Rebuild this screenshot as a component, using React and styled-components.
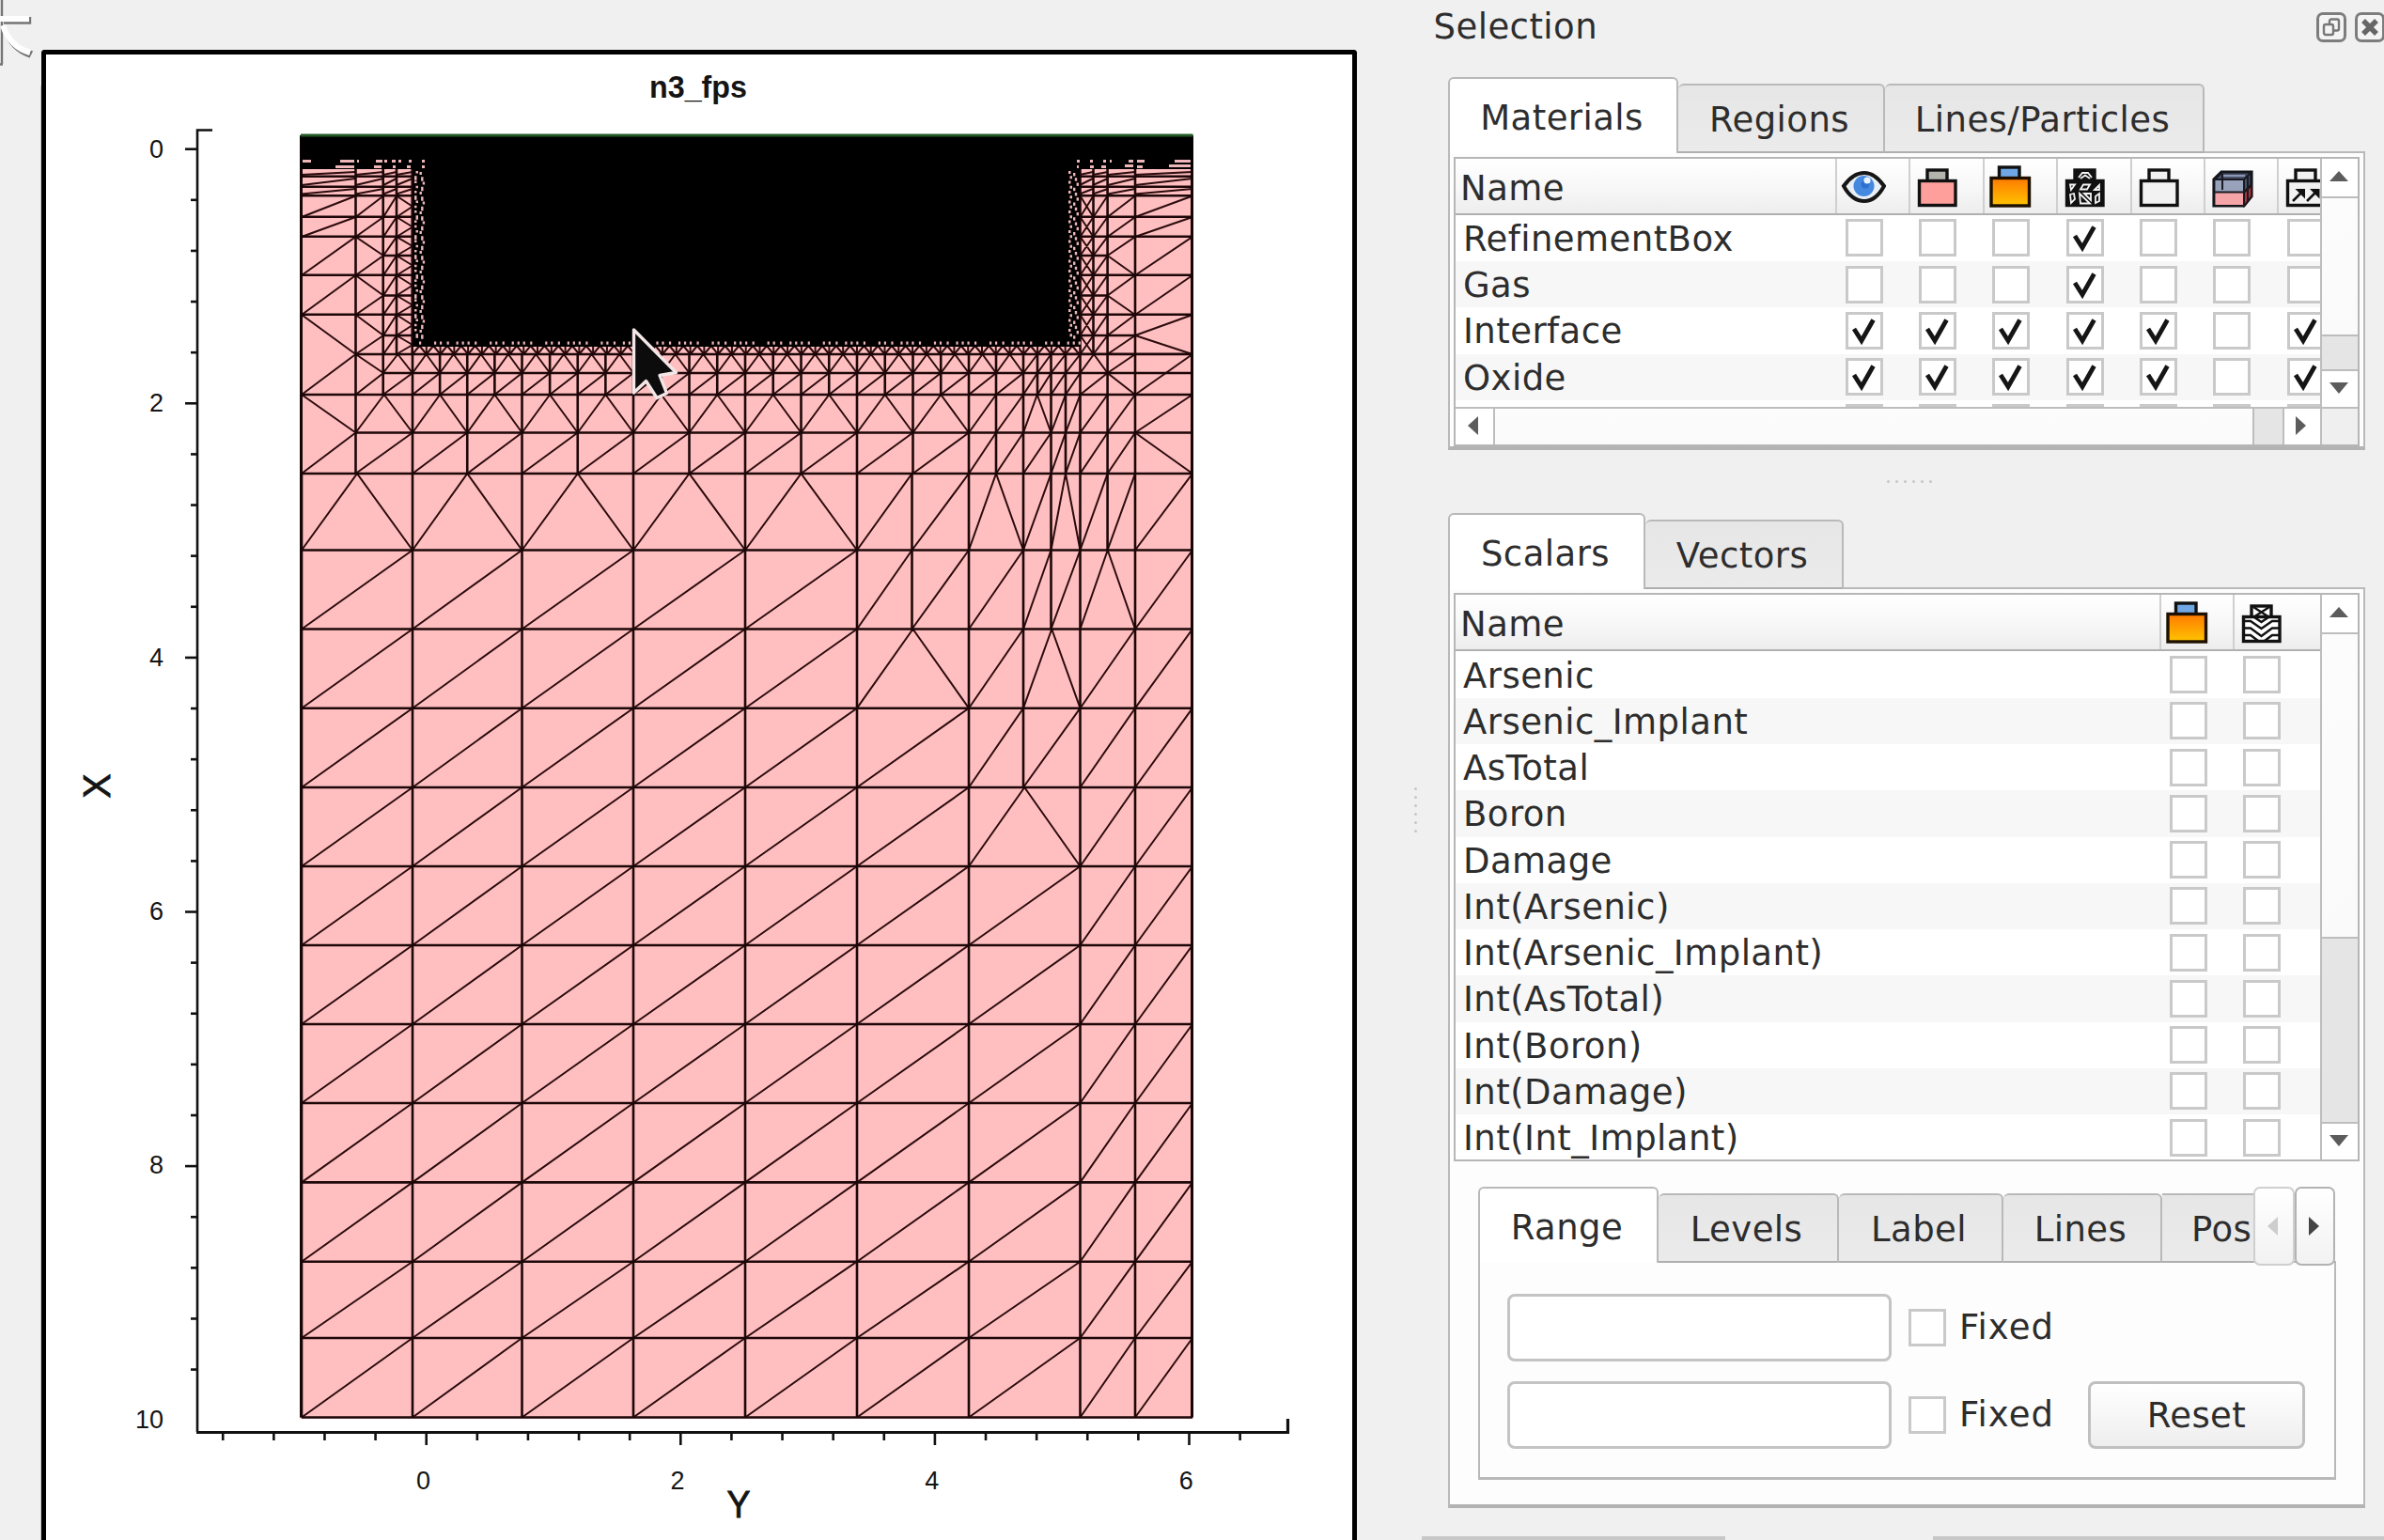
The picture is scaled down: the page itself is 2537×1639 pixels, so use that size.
import React from "react";
import styled, { createGlobalStyle, css } from "styled-components";

const Global = createGlobalStyle`
  * { box-sizing: border-box; }
  body { margin: 0; background: #f0f0f0; overflow: hidden; }
`;

const LINE = "#b9b9b9";

const Window = styled.div`
  display: flex;
  width: 2537px;
  height: 1639px;
  overflow: hidden;
  position: relative;
  background: #f0f0f0;
  color: #2d2d2d;
  font: 37px/44px "DejaVu Sans", Verdana, sans-serif;
  letter-spacing: 0.45px;
`;

/* ---------- plot ---------- */

const PlotArea = styled.main`
  flex: 0 0 1500px;
  padding: 53px 56px 0 44px;
  letter-spacing: 0;
`;

const PlotFrame = styled.div`
  height: 1600px;
  border: 5px solid #000;
  border-bottom: 0;
  border-radius: 4px 4px 0 0;
  background: #fff;
  box-shadow: -2px 36px 0 -1px #c9c9c9;
  overflow: hidden;
  svg { display: block; }
`;

const PlotText = styled.text`
  font-family: "Liberation Sans", Arial, sans-serif;
  font-size: ${(p) => p.$size}px;
  font-weight: ${(p) => (p.$bold ? 700 : 400)};
  fill: #141414;
  stroke: #141414;
  stroke-width: ${(p) => (p.$heavy ? 0.9 : 0)};
`;

const CornerMark = styled.svg`
  position: absolute;
  left: 0;
  top: 0;
`;

const R = {
  a: 208.5, b: 231, c: 252, d: 293, e: 335, f: 377, g: 397, h: 420, i: 460.5, j: 504,
  k: 585.5, l: 669.5, m: 753.7, n: 838, o: 922, p: 1006, q: 1090, r: 1174, s: 1258.4,
  t: 1342.7, u: 1424, v: 1508.5,
};
const COARSE = [321, 439, 555.5, 674, 793, 912, 1031];
const half = (xs) => xs.flatMap((x, i) => (i < xs.length - 1 ? [x, (x + xs[i + 1]) / 2] : [x]));
const MID = half(COARSE);
MID[1] = 378.5;
const FINE = half(MID);
FINE[3] = 407.7;
const cells = (xs, kind) => xs.slice(1).map((x, i) => [xs[i], x, kind]);

const bands = [
  [R.f, R.g, [...cells([...FINE.slice(3), 1060, 1089], "^"), ...cells([1089, 1104, 1118.5, 1134, 1149.5], "/"),
    [1149.5, 1178.6, "^"], [1178.6, 1208, "/"]]],
  [R.g, R.h, [...cells([...FINE.slice(3), 1060, 1089, 1104, 1118.5, 1134, 1149.5, 1178.6], "/"), [1178.6, 1208, "\\"]]],
  [R.h, R.i, [...cells(MID.slice(1), "^"), ...cells([1031, 1060, 1089], "/"), [1089, 1118.5, "^"],
    ...cells([1118.5, 1134, 1149.5, 1178.6, 1208, 1269], "/")]],
  [R.i, R.j, [...cells([...MID.slice(1), 1060, 1089, 1118.5, 1134, 1149.5, 1178.6, 1208], "/"), [1208, 1269, "\\"]]],
  [R.j, R.k, [...cells(COARSE.slice(0, 6), "^"), ...cells([912, 970.5, 1031], "/"), [1031, 1089, "^"], [1089, 1118.5, "/"],
    [1118.5, 1149.5, "^"], ...cells([1149.5, 1178.6, 1208, 1269], "/")]],
  [R.k, R.l, [...cells([...COARSE.slice(0, 6), 970.5, 1031, 1089, 1118.5, 1149.5], "/"), [1149.5, 1208, "^"], [1208, 1269, "/"]]],
  [R.l, R.m, [...cells(COARSE.slice(0, 6), "/"), [912, 1031, "^"], [1031, 1089, "/"], [1089, 1149.5, "^"],
    ...cells([1149.5, 1208, 1269], "/")]],
  [R.m, R.n, cells([...COARSE, 1089, 1149.5, 1208, 1269], "/")],
  [R.n, R.o, [...cells(COARSE, "/"), [1031, 1149.5, "^"], ...cells([1149.5, 1208, 1269], "/")]],
];
const lowRows = [R.o, R.p, R.q, R.r, R.s, R.t, R.u, R.v];
lowRows.slice(1).forEach((y, i) => bands.push([lowRows[i], y, cells([...COARSE, 1149.5, 1208, 1269], "/")]));

const seg = (x1, y1, x2, y2) => `M${x1} ${y1}L${x2} ${y2}`;

let diagonals = "";
let straights = "";
bands.forEach(([y0, y1, list]) => {
  straights += seg(list[0][0], y0, 1269, y0);
  list.forEach(([x0, x1, kind]) => {
    straights += seg(x0, y0, x0, y1);
    if (kind === "/") diagonals += seg(x0, y1, x1, y0);
    if (kind === "\\") diagonals += seg(x0, y0, x1, y1);
    if (kind === "^") diagonals += seg(x0, y1, (x0 + x1) / 2, y0) + seg(x1, y1, (x0 + x1) / 2, y0);
  });
});
straights += seg(321, R.v, 1269, R.v) + seg(321, R.h, 408, R.h) + seg(378.5, R.f, 408, R.f);
straights += seg(378.5, 150, 378.5, R.j) + seg(407.7, 150, 407.7, R.h) + seg(422, 150, 422, R.f);
straights += seg(438.7, 150, 438.7, R.f);

/* left flank */
[188, 199, R.a, R.b, R.c, R.d, R.e].forEach((y) => { straights += seg(321, y - 0.2, 452, y - 0.2); });
[272, 314.5, 357].forEach((y) => { straights += seg(408, y, 452, y) + seg(1149, y, y > 350 ? 1208 : 1179, y); });
[[R.a, R.b], [R.b, R.c], [R.c, R.d], [R.d, R.e], [R.f, R.h], [R.i, R.j]].forEach(([y0, y1]) => {
  diagonals += seg(321, y1, 378.5, y0);
});
diagonals += seg(321, R.e, 378.5, R.f) + seg(321, R.h, 378.5, R.i);
[[R.a, R.b], [R.b, R.c]].forEach(([y0, y1]) => { diagonals += seg(378.5, y1, 408, y0) + seg(1178.6, y1, 1208, y0); });
[[R.c, 272, R.d], [R.d, 314.5, R.e], [R.e, 357, R.f], [R.f, R.g, R.h]].forEach(([y0, ym, y1]) => {
  diagonals += seg(378.5, y0, 408, ym) + seg(408, ym, 378.5, y1);
});
const steps = [R.a, R.b, R.c, 272, R.d, 314.5, R.e, 357, R.f];
steps.slice(1).forEach((y, i) => {
  const y0 = steps[i];
  diagonals += seg(408, y, 422, y0) + seg(422, y0, 439, (y + y0) / 2) + seg(439, (y + y0) / 2, 422, y);
  diagonals += seg(1163.5, y, 1178.6, y0) + seg(1149.5, y, 1163.5, y0) + seg(1149.5, y0, 1163.5, y);
});

/* right flank */
[188, 199, R.a, R.b, R.c, R.d, R.e, R.f].forEach((y) => { straights += seg(1136, y - 0.2, 1269, y - 0.2); });
[1149.5, 1163.5, 1178.6, 1208].forEach((x) => { straights += seg(x, 150, x, x === 1163.5 ? R.f : R.g); });
straights += seg(1208, R.f, 1208, R.h);
[[R.a, R.b], [R.b, R.c], [R.c, R.d], [R.d, R.e], [R.f, R.h]].forEach(([y0, y1]) => { diagonals += seg(1208, y1, 1269, y0); });
diagonals += seg(1208, 357, 1269, R.e) + seg(1208, 357, 1269, R.f);
diagonals += seg(1178.6, 357, 1208, R.e) + seg(1178.6, R.f, 1208, 357);
[[R.c, 272, R.d], [R.d, 314.5, R.e]].forEach(([y0, ym, y1]) => {
  diagonals += seg(1208, y0, 1178.6, ym) + seg(1178.6, ym, 1208, y1);
});

/* thin layers just below the surface */
[[181, 188], [188, 199], [199, 208.5]].forEach(([y0, y1]) => {
  [[321, 378.5], [378.5, 408], [408, 422], [422, 439], [1149, 1163], [1163, 1179], [1179, 1208], [1208, 1269]].forEach(([x0, x1]) => {
    diagonals += seg(x0, y1 - 2, x1, y0 + 2);
  });
});

/* transition row under the refined block */
for (let x = 439; x < 1145; x += 14.78) {
  diagonals += seg(x, 368, x, R.f) + seg(x, R.f, x + 7.4, 368) + seg(x + 7.4, 368, x + 14.8, R.f);
}

const specks = [];
[[322, 170, 9], [362, 170, 15], [357, 176, 20], [400, 170, 7], [398, 176, 8], [380, 170, 2], [409, 170, 3],
  [417, 170, 4], [424, 170, 3], [435, 170, 3], [433, 176, 4], [449, 170, 3], [449, 176, 3], [418, 176, 3],
  [1146, 170, 3], [1160, 170, 3], [1174, 170, 3], [1181, 170, 2], [1201, 170, 5], [1210, 170, 8], [1250, 170, 17],
  [1244, 175, 23], [1160, 176, 4], [1172, 176, 5], [1197, 175, 9], [1210, 176, 6], [1146, 176, 2],
].forEach(([x, y, w]) => specks.push([x, y, w, 3]));
for (let y = 182, n = 0; y < 358; y += 5.25, n += 1) {
  specks.push([n % 3 ? 441 : 442.5, y, 2.5, n % 4 === 1 ? 4.5 : 2.5]);
  specks.push([446.5 + (n % 4 === 3 ? 1 : n % 4) * 1.6, y + 1, 2.4, n % 2 ? 4.5 : 3]);
  specks.push([1137 + (n % 2) * 1.5, y, 2.5, 3]);
  specks.push([1142 + (n % 3) * 1.8, y + 2, 2.4, 3.4]);
}
for (let x = 442, n = 0; x < 1146; x += 29.55, n += 1) {
  [4, 14, 20, 26].forEach((o, i) => (i !== 1 || n % 2) && specks.push([x + o, 363.5, 2.2, 3.2]));
}

const unit = 135.3;
const yTicks = Array.from({ length: 25 }, (_, i) => ({ y: 158.7 + i * unit * 0.4, major: i % 5 === 0 }));
const xTicks = Array.from({ length: 21 }, (_, i) => ({ x: 453.7 + (i - 4) * unit * 0.4, major: (i - 4) % 5 === 0 }));

function MeshPlot() {
  return (
    <svg width="1390" height="1581" viewBox="49 58 1390 1581">
      <PlotText $size={33} $bold x="691" y="104" textLength="104" lengthAdjust="spacingAndGlyphs">n3_fps</PlotText>
      <rect x="319.5" y="144" width="950" height="1366" fill="#ffbfc0" />
      <path d={diagonals} stroke="#2b0b0d" strokeWidth="2" fill="none" />
      <path d={straights} stroke="#1d0708" strokeWidth="2.6" fill="none" />
      <path d="M320.5 144V1508.5M1268.5 144V1508.5" stroke="#160506" strokeWidth="3" />
      <rect x="319.5" y="145" width="950" height="35" />
      <rect x="452" y="145" width="683.5" height="218" />
      <rect x="439.5" y="180" width="13" height="188" />
      <rect x="1135" y="180" width="14" height="188" />
      <rect x="439.5" y="362" width="710" height="7" />
      {specks.map(([x, y, w, h], i) => <rect key={i} x={x} y={y} width={w} height={h} fill="#eeb6b9" />)}
      <rect x="320" y="142.5" width="949.5" height="3" fill="#245a26" />
      <g stroke="#111" strokeWidth="2.6" fill="none">
        <path d="M226 138.5H210V1524" />
        <path d="M209 1524.5H1370.5V1510" strokeWidth="3.2" />
        {yTicks.map(({ y, major }) => <path key={y} d={`M${major ? 197 : 203} ${y}H210`} />)}
        {xTicks.map(({ x, major }) => <path key={x} d={`M${x} 1525V${major ? 1538 : 1533}`} />)}
      </g>
      {[0, 2, 4, 6, 8, 10].map((v) => (
        <PlotText key={v} $size={27} x="174" y={168 + v * 135.15} textAnchor="end">{v}</PlotText>
      ))}
      {[0, 2, 4, 6].map((v) => (
        <PlotText key={v} $size={27} x={450.5 + v * 135.3} y="1584.5" textAnchor="middle">{v}</PlotText>
      ))}
      <PlotText $size={41} $heavy x="786" y="1615" textAnchor="middle" textLength="25" lengthAdjust="spacingAndGlyphs">Y</PlotText>
      <PlotText $size={41} $heavy transform="translate(117 836.5) rotate(-90)" textAnchor="middle" textLength="26" lengthAdjust="spacingAndGlyphs">X</PlotText>
      <path d="M674.5 351V418L687.5 405.5L699 423.5L709.5 418.5L702 399.5L719.5 396.5Z" fill="#0c0c0c" stroke="#f3e6e6" strokeWidth="3.4" strokeLinejoin="round" />
    </svg>
  );
}

/* ---------- dock ---------- */

const Gutter = styled.div`
  flex: 0 0 14px;
  display: flex;
  align-items: flex-start;
  padding: 838px 0 0 5px;
`;

const Grip = styled.div`
  display: flex;
  flex-direction: ${(p) => (p.$vertical ? "column" : "row")};
  gap: 6px;
  i { width: 3px; height: 3px; border-radius: 2px; background: #c6c6c6; }
`;

const Dock = styled.aside`
  flex: 1;
  display: flex;
  flex-direction: column;
  padding-left: 27px;
`;

const DockTitle = styled.header`
  display: flex;
  height: 82px;
  margin-left: -15.5px;
  padding-top: 6px;
  h1 { margin: 0; padding-top: 1px; flex: 1; font-size: 37px; font-weight: 400; }
`;

const TitleButton = styled.div`
  width: 32px;
  height: 32px;
  margin: 7px 9px 0 0;
  border: 3px solid #7d7d7d;
  border-radius: 7px;
  background: #f4f4f4;
  svg { display: block; }
  &:last-child { margin-right: -1px; }
`;

const Strip = styled.div`
  display: flex;
  align-items: flex-end;
  height: 81px;
  position: relative;
  z-index: 1;
`;

const Tab = styled.div`
  display: flex;
  align-items: center;
  justify-content: ${(p) => (p.$cut ? "flex-start" : "center")};
  width: ${(p) => p.$w}px;
  height: 74px;
  padding: 4px ${(p) => (p.$cut ? 0 : 3)}px 0 ${(p) => (p.$cut ? 31 : 0)}px;
  overflow: hidden;
  border: 2px solid ${LINE};
  border-left-width: 0;
  border-bottom-color: #aeaeae;
  border-right-width: ${(p) => (p.$cut ? 0 : 2)}px;
  border-radius: ${(p) => (p.$cut ? 0 : "6px 6px 0 0")};
  background: linear-gradient(#e6e6e6, #ebebeb);
  ${(p) => p.$on && css`
    height: 81px;
    padding: 5px 3px 0 0;
    border-left-width: 2px;
    border-bottom: 0;
    background: #fff;
  `}
`;

const Page = styled.section`
  width: 976px;
  height: ${(p) => p.$h}px;
  margin-top: -2px;
  padding: 4px 4px 0;
  border: 2px solid ${LINE};
  border-bottom: 4px solid #b3b3b3;
  background: #fdfdfd;
`;

const ListBox = styled.div`
  display: grid;
  grid-template: 1fr ${(p) => (p.$hbar ? "40px" : "0")} / 920px 40px;
  height: ${(p) => p.$h}px;
  border: 2px solid #b6b6b6;
  background: #fff;
  overflow: hidden;
`;

const Rows = styled.div`
  display: flex;
  flex-direction: column;
  min-height: 0;
  overflow: hidden;
`;

const HeadRow = styled.div`
  display: flex;
  flex: 0 0 60px;
  height: 60px;
  margin-bottom: ${(p) => p.$gap || 0}px;
  border-bottom: 2px solid #b0b0b0;
  background: linear-gradient(#fff, #f7f7f7 55%, #ededed);
  line-height: 52px;
`;

const Row = styled.div`
  display: flex;
  flex: 0 0 49.25px;
  align-items: center;
  background: ${(p) => (p.$odd ? "#f7f7f7" : "#fff")};
`;

const NameCell = styled.div`
  flex: 0 0 ${(p) => p.$w}px;
  padding: ${(p) => (p.$head ? "6px 0 0 5px" : "3px 0 0 8px")};
`;

const IconCell = styled.div`
  flex: 0 0 78.4px;
  display: flex;
  align-items: center;
  padding: 4px 0 0 4px;
  border-left: 2px solid #cfcfcf;
`;

const BoxCell = styled.div`
  flex: 0 0 78.4px;
  padding-left: 10.5px;
`;

const Check = styled.div`
  flex: none;
  width: 40px;
  height: 40px;
  border: 3px solid #c9c9c9;
  background: #fff;
  svg { display: block; }
`;

const VBar = styled.div`
  display: flex;
  flex-direction: column;
  border-left: 2px solid #bdbdbd;
  background: #fbfbfb;
`;

const HBar = styled.div`
  display: flex;
  border-top: 2px solid #bdbdbd;
  background: #fbfbfb;
`;

const Corner = styled.div`
  border: solid #bdbdbd;
  border-width: 2px 0 0 2px;
  background: #efefef;
`;

const Arrow = styled.div`
  flex: 0 0 40px;
  display: grid;
  place-items: center;
  padding: 0 3px 2px 0;
  background: #fff;
`;

const Track = styled.div`
  flex: ${(p) => (p.$size ? `0 0 ${p.$size}px` : 1)};
  background: ${(p) => (p.$dark ? "#e5e5e5" : "linear-gradient(#fcfcfc, #fafafa)")};
  border: 0 solid #bdbdbd;
  border-width: ${(p) => (p.$h ? "0 0 0 2px" : "2px 0 0")};
`;

const Divided = styled(Arrow)`
  border: 0 solid #bdbdbd;
  border-width: ${(p) => (p.$h ? "0 0 0 2px" : "2px 0 0")};
`;

const Splitter = styled.div`
  display: flex;
  align-items: center;
  justify-content: center;
  height: 67px;
  width: 976px;
  padding-left: 6px;
`;

const Settings = styled.div`
  margin: 27px 0 0 26px;
  width: 913px;
`;

const TabArrow = styled.div`
  display: grid;
  place-items: center;
  width: 43.5px;
  height: 84px;
  margin-bottom: -3px;
  padding-right: 2px;
  border: 2px solid ${(p) => (p.$off ? "#cfcfcf" : "#b3b3b3")};
  border-radius: 7px;
  background: linear-gradient(#fff, #f2f2f2);
`;

const SettingsPage = styled.div`
  height: 233px;
  margin-top: -2px;
  padding: 33px 31px 0 29px;
  border: 2px solid ${LINE};
  border-bottom-width: 3px;
  border-top-color: #b4b4b4;
  display: flex;
  flex-direction: column;
  gap: 21px;
`;

const Field = styled.div`
  display: flex;
  align-items: center;
  height: 72px;
`;

const Input = styled.div`
  width: 409px;
  height: 72px;
  margin-right: 18px;
  border: 3px solid #c4c4c4;
  border-radius: 8px;
  background: #fff;
`;

const FieldLabel = styled.span`
  flex: 1;
  padding-left: 14px;
  letter-spacing: 1px;
`;

const Button = styled.div`
  width: 231px;
  height: 72px;
  border: 3px solid #c0c0c0;
  border-radius: 8px;
  background: linear-gradient(#fff, #eee);
  line-height: 67px;
  text-align: center;
`;

const BottomEdge = styled.div`
  display: flex;
  justify-content: space-between;
  margin: 30px 0 0 -28px;
  i { height: 4px; background: #c8c8c8; }
  i:first-child { width: 323px; }
  i:last-child { width: 480px; }
`;

/* ---------- icons ---------- */

const Tri = ({ dir, color = "#5c5c5c" }) => {
  const d = { up: "M0 11L10 0L20 11Z", down: "M0 0H20L10 12Z", left: "M11 0V20L0 10Z", right: "M0 0V20L11 10Z" }[dir];
  const tall = dir === "left" || dir === "right";
  return <svg width={tall ? 11 : 20} height={tall ? 20 : 12}><path d={d} fill={color} /></svg>;
};

const Tick = () => (
  <svg width="34" height="34" viewBox="0 0 34 34">
    <path d="M6 15L14 27.5L26.500 5.500" fill="none" stroke="#151515" strokeWidth="4.8" />
  </svg>
);

const Glyph = ({ children }) => <svg width="48" height="48" viewBox="0 0 48 48" fill="none">{children}</svg>;

const Bag = ({ top = "#f2f2f2", body = "#f2f2f2", children }) => (
  <Glyph>
    <rect x="14" y="5" width="21" height="12" fill={top} stroke="#111" strokeWidth="3.4" />
    <rect x="5.5" y="16.5" width="38.5" height="26" fill={body} stroke="#111" strokeWidth="3.4" />
    {children}
  </Glyph>
);

const icons = {
  eye: (
    <Glyph>
      <path d="M3 22C10 12 17 8 25 8S39 12 46 22C40 33 33 38 25 38S9 33 3 22Z" fill="#e9eff5" stroke="#161616" strokeWidth="4" />
      <circle cx="24.5" cy="22" r="11" fill="#4489df" />
      <circle cx="26" cy="20" r="4.5" fill="#2f6fd0" />
      <circle cx="28" cy="16" r="3.6" fill="#e8f4ff" />
    </Glyph>
  ),
  solid: <Bag top="#b4b4ae" body="#ff9f9b" />,
  gradient: (
    <Glyph>
      <defs>
        <linearGradient id="heat" x1="0" y1="0" x2="0" y2="1">
          <stop offset="0" stopColor="#ff7a00" /><stop offset="1" stopColor="#ffc400" />
        </linearGradient>
      </defs>
      <rect x="11.5" y="2" width="21.5" height="12" fill="#6fa8e4" stroke="#111" strokeWidth="3.4" />
      <rect x="3" y="13.5" width="40.5" height="29.5" fill="url(#heat)" stroke="#1d1000" strokeWidth="3.4" />
    </Glyph>
  ),
  mesh: (
    <Bag top="#111" body="#111">
      <path d="M18 13L22 8H28L32 13M20 14L25 10.500L30 14" stroke="#f4f4f4" strokeWidth="1.8" />
      <path d="M9 20.500H14L10 26ZM20 25.500L23 20.500H30L27 25.500ZM35 26L40 21V26ZM9 31L13 30L14 36L10 40ZM19 30L30 40.500H20ZM24 30H31V37ZM36 33L40 30V38L36 40Z" stroke="#f4f4f4" strokeWidth="1.8" />
    </Bag>
  ),
  outline: <Bag />,
  cube: (
    <Glyph>
      <path d="M5 15L13 7H45V33L37 43H5Z" fill="#48506a" stroke="#15161c" strokeWidth="3.2" />
      <path d="M37 29L45 22V33L37 43Z" fill="#a53540" stroke="#2a1013" strokeWidth="1.5" />
      <rect x="6.5" y="16" width="30" height="12" fill="#98a2bb" />
      <rect x="6.5" y="29" width="30" height="13" fill="#f5a5a8" />
      <path d="M5 15H37L44 8M37 15V43M5 28.5H37L45 20M14 9V26M41 11V38" stroke="#191a22" strokeWidth="2" />
      <path d="M15 11H38" stroke="#8f98b0" strokeWidth="2" />
    </Glyph>
  ),
  vectors: (
    <Bag>
      <path d="M11 38L21 28M26 38L36 28" stroke="#111" strokeWidth="2.6" />
      <path d="M13.5 25H24V35.5ZM29 25H39.5V35.5Z" fill="#111" />
    </Bag>
  ),
  contour: (
    <Bag top="#fff" body="#fff">
      <path d="M16 6L33 17M33 6L16 17M6 21H13L24.5 29L36 21H44M6 28.5H13L24.5 37L36 28.5H44M6 36H13L21 42M44 36H36L28 42M17 17L24.5 22L32 17" stroke="#111" strokeWidth="2.4" />
    </Bag>
  ),
};

/* ---------- data ---------- */

const materialIcons = ["eye", "solid", "gradient", "mesh", "outline", "cube", "vectors"];
const materials = [
  ["RefinementBox", "0001000"],
  ["Gas", "0001000"],
  ["Interface", "1111101"],
  ["Oxide", "1111101"],
  ["", "0000000"],
];
const scalars = ["Arsenic", "Arsenic_Implant", "AsTotal", "Boron", "Damage", "Int(Arsenic)", "Int(Arsenic_Implant)",
  "Int(AsTotal)", "Int(Boron)", "Int(Damage)", "Int(Int_Implant)"];

function Table({ nameWidth, iconNames, rows, gap }) {
  return (
    <Rows>
      <HeadRow $gap={gap}>
        <NameCell $head $w={nameWidth}>Name</NameCell>
        {iconNames.map((n) => <IconCell key={n}>{icons[n]}</IconCell>)}
      </HeadRow>
      {rows.map(([name, flags], i) => (
        <Row key={i} $odd={i % 2 === 1}>
          <NameCell $w={nameWidth}>{name}</NameCell>
          {[...flags].map((f, k) => (
            <BoxCell key={k}><Check>{f === "1" && <Tick />}</Check></BoxCell>
          ))}
        </Row>
      ))}
    </Rows>
  );
}

const Dots = ({ vertical }) => (
  <Grip $vertical={vertical}>{[0, 1, 2, 3, 4, 5].map((n) => <i key={n} />)}</Grip>
);

export default function App() {
  return (
    <Window>
      <Global />
      <PlotArea>
        <PlotFrame><MeshPlot /></PlotFrame>
      </PlotArea>
      <Gutter><Dots vertical /></Gutter>
      <Dock>
        <DockTitle>
          <h1>Selection</h1>
          <TitleButton>
            <svg width="26" height="26" viewBox="0 0 26 26" fill="#f4f4f4" stroke="#777" strokeWidth="2.4">
              <rect x="11" y="4.5" width="10" height="12" rx="2" /><rect x="5" y="10" width="10" height="11" rx="2" />
            </svg>
          </TitleButton>
          <TitleButton>
            <svg width="26" height="26" viewBox="0 0 26 26"><path d="M6 6L20 20M20 6L6 20" stroke="#666" strokeWidth="5.5" /></svg>
          </TitleButton>
        </DockTitle>

        <Strip>
          <Tab $on $w={245}>Materials</Tab>
          <Tab $w={220}>Regions</Tab>
          <Tab $w={340}>Lines/Particles</Tab>
        </Strip>
        <Page $h={318}>
          <ListBox $h={308} $hbar>
            <Table nameWidth={404} iconNames={materialIcons} rows={materials} />
            <VBar>
              <Arrow><Tri dir="up" /></Arrow>
              <Track />
              <Track $dark $size={37} />
              <Divided><Tri dir="down" /></Divided>
            </VBar>
            <HBar>
              <Arrow><Tri dir="left" /></Arrow>
              <Track $h />
              <Track $h $dark $size={32} />
              <Divided $h><Tri dir="right" /></Divided>
            </HBar>
            <Corner />
          </ListBox>
        </Page>

        <Splitter><Dots /></Splitter>

        <Strip>
          <Tab $on $w={210}>Scalars</Tab>
          <Tab $w={211}>Vectors</Tab>
        </Strip>
        <Page $h={983}>
          <ListBox $h={605}>
            <Table nameWidth={749} iconNames={["gradient", "contour"]} rows={scalars.map((s) => [s, "00"])} gap={1} />
            <VBar>
              <Arrow><Tri dir="up" /></Arrow>
              <Track />
              <Track $dark $size={197} />
              <Divided><Tri dir="down" /></Divided>
            </VBar>
          </ListBox>
          <Settings>
            <Strip>
              <Tab $on $w={192}>Range</Tab>
              <Tab $w={192}>Levels</Tab>
              <Tab $w={175}>Label</Tab>
              <Tab $w={169}>Lines</Tab>
              <Tab $cut $w={97}>Pos</Tab>
              <TabArrow $off><Tri dir="left" color="#cdcdcd" /></TabArrow>
              <TabArrow><Tri dir="right" color="#444" /></TabArrow>
            </Strip>
            <SettingsPage>
              <Field><Input /><Check /><FieldLabel>Fixed</FieldLabel></Field>
              <Field><Input /><Check /><FieldLabel>Fixed</FieldLabel><Button>Reset</Button></Field>
            </SettingsPage>
          </Settings>
        </Page>
        <BottomEdge><i /><i /></BottomEdge>
      </Dock>
      <CornerMark width="40" height="72" viewBox="0 0 40 72" fill="none">
        <path d="M2 0V68M0 68.5H3M4 24.5H32V18M5 34C10 48 20 56 31 60L34 54" stroke="#757575" strokeWidth="2.4" />
        <path d="M0 20H31M3 27C8 42 18 52 32 56" stroke="#fff" strokeWidth="6" />
      </CornerMark>
    </Window>
  );
}
